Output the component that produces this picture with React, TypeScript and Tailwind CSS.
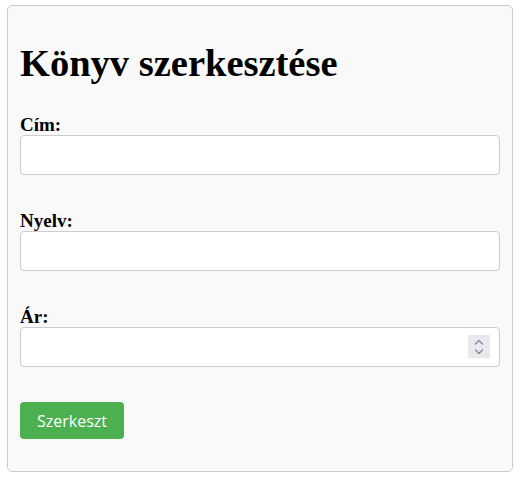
import React from 'react';

const fields = [
  { id: 'cim', label: 'Cím:', type: 'text' },
  { id: 'nyelv', label: 'Nyelv:', type: 'text' },
  { id: 'ar', label: 'Ár:', type: 'number' },
];

function Spinner() {
  return (
    <div className="pointer-events-none absolute right-[10px] top-[8px] flex h-[23px] w-[22px] flex-col items-center justify-center bg-[#e9e9ed]">
      <svg width="10" height="18" viewBox="0 0 10 18" fill="none" stroke="#8a8a94" strokeWidth="1.4" strokeLinecap="round" strokeLinejoin="round">
        <path d="M1.5 6 L5 2.5 L8.5 6" />
        <path d="M1.5 12 L5 15.5 L8.5 12" />
      </svg>
    </div>
  );
}

export default function App() {
  return (
    <div className="min-h-[478px] bg-white pl-[7px] pr-[8px] pt-[5px] font-['Liberation_Serif',serif]">
      <div className="w-[506px] rounded-[5px] border border-[#cccccc] bg-[#f9f9f9] px-[12px] pb-[32px] pt-[12px]">
        <h1 className="mt-[24px] mb-[30px] text-[38.5px] font-bold leading-[42px] text-black">
          Könyv szerkesztése
        </h1>
        <form onSubmit={(e) => e.preventDefault()}>
          {fields.map((f) => (
            <div key={f.id} className="mb-[35px]">
              <label htmlFor={f.id} className="block text-[19px] font-bold leading-[21px] text-black">
                {f.label}
              </label>
              <div className="relative">
                <input
                  id={f.id}
                  type="text"
                  className="block h-[40px] w-full rounded-[4px] border border-[#cccccc] bg-white px-[10px] text-[16px] outline-none"
                />
                {f.type === 'number' && <Spinner />}
              </div>
            </div>
          ))}
          <button
            type="submit"
            className="h-[37px] w-[104px] rounded-[4px] bg-[#4caf50] font-['Open_Sans',sans-serif] text-[16px] text-white"
          >
            Szerkeszt
          </button>
        </form>
      </div>
    </div>
  );
}
